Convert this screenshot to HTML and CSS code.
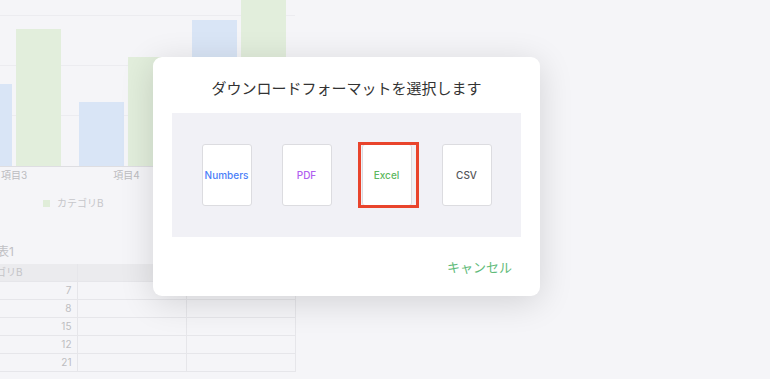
FILE: index.html
```html
<!DOCTYPE html>
<html lang="ja">
<head>
<meta charset="utf-8">
<title>ダウンロード</title>
<link rel="stylesheet" href="styles.css">
</head>
<body>
<div class="bg">
  <div class="plot">
    <div class="band"><div class="bar blue" style="height:82px"></div><div class="bar green" style="height:137px"></div></div>
    <div class="band"><div class="bar blue" style="height:64px"></div><div class="bar green" style="height:109px"></div></div>
    <div class="band"><div class="bar blue" style="height:146px"></div><div class="bar green" style="height:175px"></div></div>
  </div>
  <div class="xlabels">
    <span>項目3</span><span>項目4</span><span></span>
  </div>
  <div class="legend"><span class="swatch"></span><span>カテゴリB</span></div>
  <div class="table-title">表1</div>
  <table class="sheet">
    <tr class="head"><td>カテゴリB</td><td></td><td></td></tr>
    <tr><td class="num">7</td><td></td><td></td></tr>
    <tr><td class="num">8</td><td></td><td></td></tr>
    <tr><td class="num">15</td><td></td><td></td></tr>
    <tr><td class="num">12</td><td></td><td></td></tr>
    <tr><td class="num">21</td><td></td><td></td></tr>
  </table>
</div>

<div class="modal">
  <h2 class="title">ダウンロードフォーマットを選択します</h2>
  <div class="panel">
    <div class="card numbers">Numbers</div>
    <div class="card pdf">PDF</div>
    <div class="card excel selected">Excel</div>
    <div class="card csv">CSV</div>
  </div>
  <div class="footer"><span class="cancel">キャンセル</span></div>
</div>
</body>
</html>
```
FILE: styles.css
```css
html, body {
  margin: 0;
  padding: 0;
  width: 770px;
  height: 379px;
  overflow: hidden;
  background: #f5f5f8;
  font-family: "Inter", "Noto Sans CJK JP", sans-serif;
}

.bg {
  width: 295px;
  overflow: visible;
}

.plot {
  margin-left: -42px;
  width: 337px;
  height: 166px;
  display: flex;
  overflow: hidden;
  border-bottom: 1px solid #dedee2;
  background:
    linear-gradient(#ececf0, #ececf0) 0 15px / 100% 1px no-repeat,
    linear-gradient(#ececf0, #ececf0) 0 65px / 100% 1px no-repeat,
    linear-gradient(#ececf0, #ececf0) 0 115px / 100% 1px no-repeat;
}

.band {
  flex: 1;
  display: flex;
  justify-content: center;
  align-items: flex-end;
  gap: 4px;
}

.bar {
  width: 45px;
  flex: none;
}

.bar.blue { background: #d9e5f6; }
.bar.green { background: #e2eedc; }

.xlabels {
  margin-left: -42px;
  width: 337px;
  display: flex;
  font-size: 10px;
  line-height: 14px;
  color: #bcbcc0;
  padding-top: 1px;
}

.xlabels span {
  flex: 1;
  text-align: center;
}

.legend {
  margin: 14px 0 0 43px;
  display: flex;
  align-items: center;
  gap: 7px;
  font-size: 10px;
  line-height: 14px;
  color: #c6c6ca;
}

.swatch {
  width: 7px;
  height: 7px;
  background: #e0edd9;
}

.table-title {
  margin: 34px 0 4px -3px;
  font-size: 12px;
  line-height: 16px;
  color: #c0c0c4;
}

.sheet {
  margin-left: -32px;
  border-collapse: collapse;
  table-layout: fixed;
  width: 327px;
  font-size: 10px;
  color: #bdbdc1;
}

.sheet td {
  width: 109px;
  height: 17px;
  padding: 0 5px 0 8px;
  box-sizing: border-box;
  border-right: 1px solid #e6e6ea;
  border-bottom: 1px solid #e6e6ea;
  line-height: 17px;
}

.sheet .head td {
  background: #ebebee;
  color: #c4c4c8;
}

.sheet td.num {
  text-align: right;
}

.modal {
  position: absolute;
  left: 153px;
  top: 57px;
  width: 387px;
  height: 239px;
  box-sizing: border-box;
  padding: 22px 19px 0;
  background: #ffffff;
  border-radius: 9px;
  box-shadow: 0 6px 34px rgba(0, 0, 0, 0.14);
}

.title {
  margin: 0 0 14px;
  font-size: 15px;
  line-height: 20px;
  font-weight: 400;
  text-align: center;
  color: #333333;
}

.panel {
  height: 124px;
  background: #f1f1f6;
  display: flex;
  justify-content: center;
  align-items: center;
  gap: 30px;
}

.card {
  position: relative;
  width: 50px;
  height: 62px;
  box-sizing: border-box;
  background: #ffffff;
  border: 1px solid #dcdce0;
  border-radius: 3px;
  display: flex;
  align-items: center;
  justify-content: center;
  font-size: 10px;
  font-weight: 500;
}

.card.numbers { color: #4b7ef8; }
.card.pdf { color: #b160f0; }
.card.excel { color: #5db85e; }
.card.csv { color: #555558; }

.card.selected::after {
  content: "";
  position: absolute;
  left: -5px;
  top: -3px;
  width: 61px;
  height: 66px;
  box-sizing: border-box;
  border: 3px solid #e9442c;
}

.footer {
  display: flex;
  justify-content: flex-end;
  padding: 21px 9px 0 0;
}

.cancel {
  font-size: 13px;
  line-height: 18px;
  color: #5fbb7a;
}
```
